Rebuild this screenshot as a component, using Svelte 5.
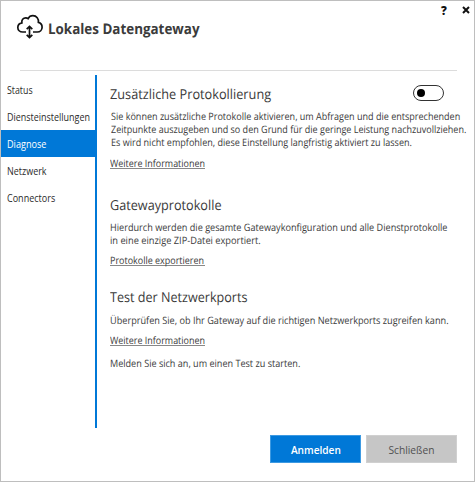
<script>
  const nav = [
    { label: 'Status', k: 0.865 },
    { label: 'Diensteinstellungen', k: 0.88 },
    { label: 'Diagnose', k: 0.895 },
    { label: 'Netzwerk', k: 0.88 },
    { label: 'Connectors', k: 0.886 }
  ];
  let active = $state('Diagnose');
  let logging = $state(false);
</script>

{#snippet text(label, k)}
  <span class="t" style:--k={k}>{label}</span>
{/snippet}

<div class="window">
  <header>
    <svg class="logo" width="28" height="26" viewBox="0 0 28 26" fill="none" stroke="#111" stroke-width="1.7">
      <path d="M10 18H6.7C3.8 18 1.8 16 1.8 13.5C1.8 11 3.5 9.2 5.9 8.8C5.3 5.8 7.2 3.8 9.8 3.8C10.7 3.8 11.5 4 12.1 4.6C13.1 2.7 14.8 1.7 16.9 1.7C20.6 1.7 22.9 4.7 22.4 8.4C24.7 9 26.1 10.9 26.1 13.2C26.1 16 24 18 21.3 18H17" />
      <path d="M13.5 13V23M10.7 15.2L13.5 12.4L16.3 15.2M10.7 20.8L13.5 23.6L16.3 20.8" />
    </svg>
    <h1>{@render text('Lokales Datengateway', 0.918)}</h1>
    <div class="controls">
      <button class="icon help" aria-label="Hilfe">?</button>
      <button class="icon" aria-label="Fenster schließen">
        <svg width="8" height="8" viewBox="0 0 8 8" stroke="#111" stroke-width="2"><path d="M1 1L7 7M7 1L1 7" /></svg>
      </button>
    </div>
  </header>
  <div class="rule"></div>

  <div class="body">
    <nav>
      {#each nav as item}
        <button class:active={active === item.label} onclick={() => (active = item.label)}>
          {@render text(item.label, item.k)}
        </button>
      {/each}
    </nav>
    <main>
      <section>
        <div class="heading">
          <h2>{@render text('Zusätzliche Protokollierung', 0.93)}</h2>
          <button class="toggle" class:on={logging} aria-label="Zusätzliche Protokollierung" onclick={() => (logging = !logging)}><i></i></button>
        </div>
        <p class="first">
          {@render text('Sie können zusätzliche Protokolle aktivieren, um Abfragen und die entsprechenden', 0.887)}
          {@render text('Zeitpunkte auszugeben und so den Grund für die geringe Leistung nachzuvollziehen.', 0.885)}
          {@render text('Es wird nicht empfohlen, diese Einstellung langfristig aktiviert zu lassen.', 0.888)}
        </p>
        <a class="more" href="#info">{@render text('Weitere Informationen', 0.879)}</a>
      </section>
      <section class="export">
        <h2>{@render text('Gatewayprotokolle', 0.925)}</h2>
        <p class="files">
          {@render text('Hierdurch werden die gesamte Gatewaykonfiguration und alle Dienstprotokolle', 0.896)}
          {@render text('in eine einzige ZIP-Datei exportiert.', 0.909)}
        </p>
        <a href="#export">{@render text('Protokolle exportieren', 0.88)}</a>
      </section>
      <section class="ports">
        <h2>{@render text('Test der Netzwerkports', 0.92)}</h2>
        <p>{@render text('Überprüfen Sie, ob Ihr Gateway auf die richtigen Netzwerkports zugreifen kann.', 0.8975)}</p>
        <a href="#ports">{@render text('Weitere Informationen', 0.879)}</a>
        <p class="hint">{@render text('Melden Sie sich an, um einen Test zu starten.', 0.8915)}</p>
      </section>
    </main>
  </div>

  <footer>
    <button class="primary">{@render text('Anmelden', 0.895)}</button>
    <button class="secondary">{@render text('Schließen', 0.905)}</button>
  </footer>
</div>

<style>
  :global(body) { margin: 0; }
  .window {
    box-sizing: border-box;
    width: 475px;
    height: 482px;
    border: 1px solid #bebebe;
    background: #fff;
    color: #3a3a3a;
    font-family: "Open Sans", "Noto Sans", sans-serif;
    font-size: 10.2px;
    text-rendering: geometricPrecision;
    display: flex;
    flex-direction: column;
    overflow: hidden;
  }
  .t { display: block; width: max-content; white-space: nowrap; transform: scaleX(var(--k)); transform-origin: 0 50%; }
  button { font: inherit; color: inherit; border: 0; padding: 0; margin: 0; background: none; }
  header { height: 69px; display: flex; padding-left: 15px; flex: none; box-sizing: border-box; }
  .logo { margin-top: 13px; flex: none; }
  h1 { margin: 16px 0 0 4px; font-size: 14.6px; line-height: 24px; height: 24px; width: 152px; font-weight: 700; color: #3b3b3b; }
  .controls { margin-left: auto; padding: 3px 4px 0 0; display: flex; gap: 14px; height: 12px; color: #111; }
  .icon { display: flex; align-items: center; justify-content: center; width: 8px; height: 12px; }
  .help { font-size: 11.5px; font-weight: 800; }
  .rule { height: 1px; margin: 0 17px 0 19px; background: #dcdcdc; flex: none; }
  .body { display: flex; height: 353px; margin-top: 4px; flex: none; }
  nav { width: 94px; border-right: 2px solid #0078d7; flex: none; color: #2b2b2b; padding-top: 1px; height: 352px; }
  nav button { display: block; width: 94px; height: 27px; line-height: 29px; text-align: left; padding-left: 6px; }
  nav button.active { background: #0078d7; color: #fff; }
  main { padding-left: 13px; width: 371px; box-sizing: border-box; }
  .heading { display: flex; justify-content: space-between; width: 334px; height: 20px; }
  h2 { margin: 0; font-size: 13.7px; font-weight: 400; line-height: 22px; height: 20px; }
  section { padding-top: 9px; }
  .toggle { box-sizing: border-box; width: 31px; height: 16px; margin-top: 1px; border: 1px solid #333; border-radius: 8px; padding: 3px; display: flex; align-items: center; }
  .toggle.on { justify-content: flex-end; }
  .toggle i { width: 8px; height: 8px; border-radius: 50%; background: #000; }
  p { margin: 7px 0 0; line-height: 13px; }
  .first, .files { margin-top: 6px; }
  .first { padding-left: 1px; }
  a { display: block; width: 95px; margin-top: 7px; color: inherit; text-decoration: none; line-height: 13px; height: 11px; border-bottom: 1px solid #888; }
  .more { margin-top: 8px; }
  .export { padding-top: 26px; }
  .ports { padding-top: 21px; }
  .hint { margin-top: 11px; }
  footer { display: flex; justify-content: flex-end; gap: 5px; margin: 7px 17px 0 0; }
  footer button { width: 91px; height: 28px; font-size: 11.3px; line-height: 28px; box-sizing: border-box; display: flex; justify-content: center; }
  footer .t { transform-origin: 50% 50%; }
  .primary { background: #0078d7; border: 1px solid #3d9ae2; color: #fff; font-weight: 600; }
  .secondary { background: #c6c6c6; border: 1px solid #d0d0d0; color: #505050; }
</style>
